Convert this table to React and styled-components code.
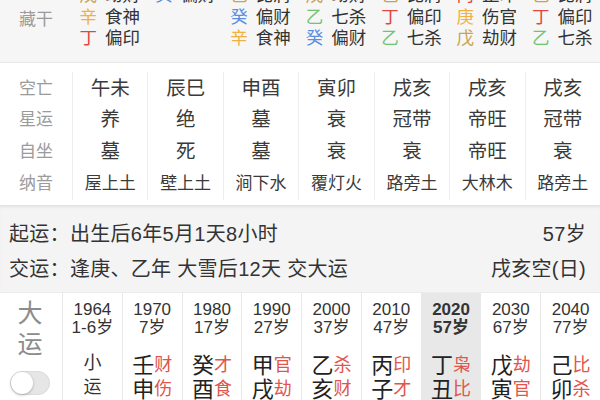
import React from 'react';
import styled, { createGlobalStyle } from 'styled-components';

const Global = createGlobalStyle`
  html, body { margin: 0; padding: 0; background: #f5f5f5; }
  body { font-family: "Liberation Sans", "Noto Sans CJK SC", sans-serif; }
  * { box-sizing: border-box; }
`;

const Page = styled.div`
  width: 600px;
  height: 400px;
  overflow: hidden;
  background: #f5f5f5;
`;

const STEM_COLORS = {
  甲: '#72c472', 乙: '#72c472',
  丙: '#e0463e', 丁: '#e0463e',
  戊: '#c9a34e', 己: '#c9a34e',
  庚: '#f0b042', 辛: '#f0b042',
  壬: '#5a8ee0', 癸: '#5a8ee0',
};

/* ---------- 藏干 ---------- */
const HiddenSection = styled.section`
  display: grid;
  grid-template-columns: 72px repeat(7, 1fr);
  margin-top: -15px;
  padding-bottom: 12px;
  background: #f6f6f6;
  border-bottom: 1px solid #e9e9e9;
`;

const SideLabel = styled.div`
  display: flex;
  align-items: center;
  justify-content: center;
  color: #9b9b9b;
  font-size: 17px;
`;

const HiddenCol = styled.div`
  display: flex;
  flex-direction: column;
  align-items: center;
`;

const HiddenItem = styled.div`
  display: flex;
  gap: 8px;
  font-size: 17.5px;
  line-height: 21.5px;
  color: #333;
`;

const Stem = styled.span`
  color: ${(p) => p.$color};
`;

/* ---------- 命盘细节 ---------- */
const DetailSection = styled.section`
  display: grid;
  grid-template-columns: 72px repeat(7, 1fr);
  padding: 9px 0 5px;
  background: #fff;
`;

const DetailCol = styled.div`
  display: flex;
  flex-direction: column;
  align-items: center;
  padding: 1px 0;
  border-left: ${(p) => (p.$first ? 'none' : '1px solid #ededed')};
`;

const DetailLabel = styled.div`
  font-size: 17px;
  line-height: 31.7px;
  color: #9b9b9b;
`;

const DetailValue = styled.div`
  font-size: ${(p) => (p.$small ? '17px' : '19.5px')};
  line-height: 31.7px;
  color: #3a3a3a;
  white-space: nowrap;
`;

/* ---------- 起运 ---------- */
const InfoSection = styled.section`
  padding: 9px 14px 7px 9px;
  background: #f4f4f4;
  border-top: 1px solid #e0e0e0;
  box-shadow: inset 0 2px 2px rgba(0, 0, 0, 0.04);
`;

const InfoRow = styled.div`
  display: flex;
  justify-content: space-between;
  align-items: center;
  height: 35px;
  font-size: 20px;
  letter-spacing: 0.3px;
  color: #333;
  white-space: nowrap;
`;

/* ---------- 大运 ---------- */
const LuckSection = styled.section`
  display: grid;
  grid-template-columns: 62px repeat(9, 1fr);
  background: #fff;
  height: 120px;
  border-top: 1px solid #ececec;
`;

const LuckLabelCol = styled.div`
  display: flex;
  flex-direction: column;
  align-items: center;
  padding-top: 5px;
  padding-right: 2px;
`;

const BigLabel = styled.div`
  font-size: 25px;
  line-height: 31px;
  color: #8c8c8c;
`;

const Toggle = styled.div`
  position: relative;
  width: 40px;
  height: 24px;
  margin-top: 11px;
  border-radius: 12px;
  background: #e6e6e6;
  border: 1px solid #dadada;
`;

const Knob = styled.div`
  position: absolute;
  top: 0px;
  left: 0px;
  width: 22px;
  height: 22px;
  border-radius: 50%;
  background: #fff;
  box-shadow: 0 1px 3px rgba(0, 0, 0, 0.25);
`;

const LuckCol = styled.div`
  display: flex;
  flex-direction: column;
  align-items: center;
  padding-top: 8px;
  border-left: 1px solid #e8e8e8;
  background: ${(p) => (p.$active ? '#e8e8e8' : '#fff')};
`;

const Year = styled.div`
  font-size: 17px;
  line-height: 18px;
  color: #333;
  font-weight: ${(p) => (p.$bold ? 700 : 400)};
`;

const Pillars = styled.div`
  display: flex;
  flex-direction: column;
  margin-top: 14px;
`;

const PillarRow = styled.div`
  display: flex;
  align-items: center;
  height: 24px;
`;

const BigChar = styled.span`
  font-size: 22px;
  color: #222;
`;

const GodChar = styled.span`
  font-size: 18px;
  color: #e0554c;
`;

const SmallRun = styled.div`
  font-size: 18px;
  line-height: 24px;
  color: #333;
`;

const hidden = [
  [['戊', '劫财'], ['辛', '食神'], ['丁', '偏印']],
  [['癸', '偏财']],
  [['己', '比肩'], ['癸', '偏财'], ['辛', '食神']],
  [['戊', '劫财'], ['乙', '七杀'], ['癸', '偏财']],
  [['己', '比肩'], ['丁', '偏印'], ['乙', '七杀']],
  [['丙', '正印'], ['庚', '伤官'], ['戊', '劫财']],
  [['己', '比肩'], ['丁', '偏印'], ['乙', '七杀']],
];

const labels = ['空亡', '星运', '自坐', '纳音'];
const details = [
  ['午未', '养', '墓', '屋上土'],
  ['辰巳', '绝', '死', '壁上土'],
  ['申酉', '墓', '墓', '涧下水'],
  ['寅卯', '衰', '衰', '覆灯火'],
  ['戌亥', '冠带', '衰', '路旁土'],
  ['戌亥', '帝旺', '帝旺', '大林木'],
  ['戌亥', '冠带', '衰', '路旁土'],
];

const luck = [
  { y: '1964', a: '1-6岁', small: true },
  { y: '1970', a: '7岁', s: '壬', b: '申', g1: '财', g2: '伤' },
  { y: '1980', a: '17岁', s: '癸', b: '酉', g1: '才', g2: '食' },
  { y: '1990', a: '27岁', s: '甲', b: '戌', g1: '官', g2: '劫' },
  { y: '2000', a: '37岁', s: '乙', b: '亥', g1: '杀', g2: '财' },
  { y: '2010', a: '47岁', s: '丙', b: '子', g1: '印', g2: '才' },
  { y: '2020', a: '57岁', s: '丁', b: '丑', g1: '枭', g2: '比', active: true },
  { y: '2030', a: '67岁', s: '戊', b: '寅', g1: '劫', g2: '官' },
  { y: '2040', a: '77岁', s: '己', b: '卯', g1: '比', g2: '杀' },
];

export default function App() {
  return (
    <Page>
      <Global />
      <HiddenSection>
        <SideLabel>藏干</SideLabel>
        {hidden.map((col, i) => (
          <HiddenCol key={i}>
            {col.map(([s, g], j) => (
              <HiddenItem key={j}>
                <Stem $color={STEM_COLORS[s]}>{s}</Stem>
                <span>{g}</span>
              </HiddenItem>
            ))}
          </HiddenCol>
        ))}
      </HiddenSection>

      <DetailSection>
        <DetailCol $first>
          {labels.map((l) => (
            <DetailLabel key={l}>{l}</DetailLabel>
          ))}
        </DetailCol>
        {details.map((col, i) => (
          <DetailCol key={i}>
            {col.map((v, j) => (
              <DetailValue key={j} $small={j === 3}>{v}</DetailValue>
            ))}
          </DetailCol>
        ))}
      </DetailSection>

      <InfoSection>
        <InfoRow>
          <span>起运：出生后6年5月1天8小时</span>
          <span>57岁</span>
        </InfoRow>
        <InfoRow>
          <span>交运：逢庚、乙年 大雪后12天 交大运</span>
          <span>戌亥空(日)</span>
        </InfoRow>
      </InfoSection>

      <LuckSection>
        <LuckLabelCol>
          <BigLabel>大</BigLabel>
          <BigLabel>运</BigLabel>
          <Toggle>
            <Knob />
          </Toggle>
        </LuckLabelCol>
        {luck.map((c) => (
          <LuckCol key={c.y} $active={c.active}>
            <Year $bold={c.active}>{c.y}</Year>
            <Year $bold={c.active}>{c.a}</Year>
            <Pillars>
              {c.small ? (
                <>
                  <SmallRun>小</SmallRun>
                  <SmallRun>运</SmallRun>
                </>
              ) : (
                <>
                  <PillarRow>
                    <BigChar>{c.s}</BigChar>
                    <GodChar>{c.g1}</GodChar>
                  </PillarRow>
                  <PillarRow>
                    <BigChar>{c.b}</BigChar>
                    <GodChar>{c.g2}</GodChar>
                  </PillarRow>
                </>
              )}
            </Pillars>
          </LuckCol>
        ))}
      </LuckSection>
    </Page>
  );
}
